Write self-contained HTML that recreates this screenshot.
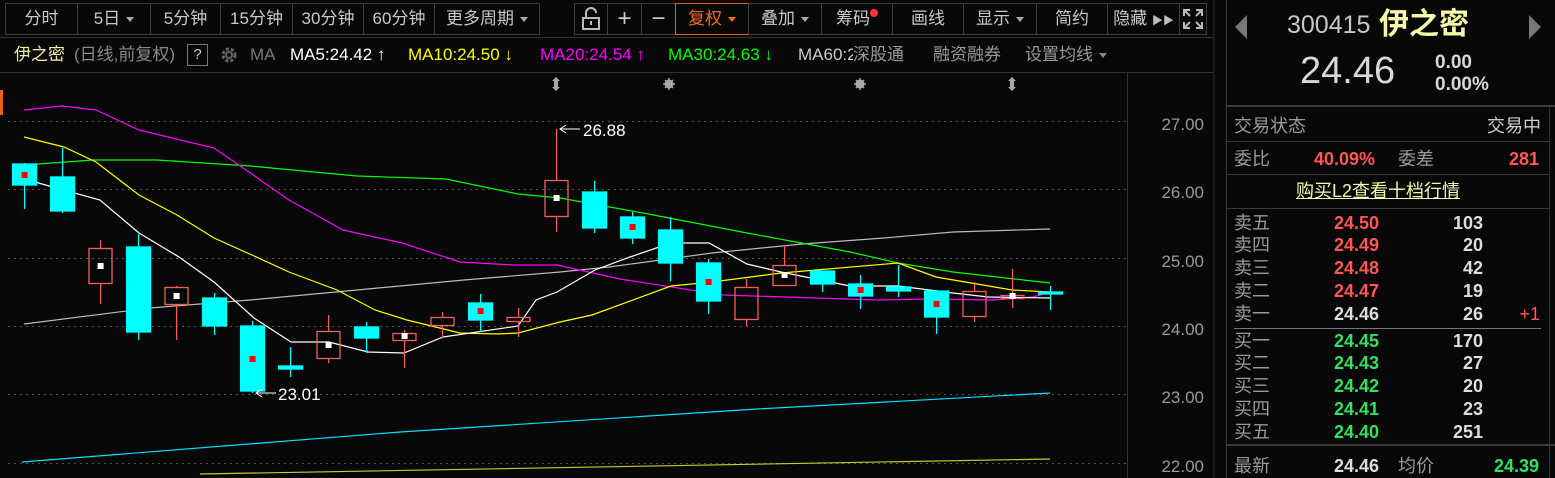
<!DOCTYPE html>
<html><head><meta charset="utf-8"><style>
*{margin:0;padding:0;box-sizing:border-box}
body{width:1555px;height:478px;background:#080808;overflow:hidden;position:relative;font-family:"Liberation Sans","Noto Sans CJK SC",sans-serif;color:#ccc}
.a{position:absolute;white-space:nowrap;line-height:22px}
.btn{position:absolute;top:3px;height:32px;border:1px solid #3c3c3c;color:#c8c8c8;font-size:17px;line-height:30px;text-align:center}
.tri{display:inline-block;width:0;height:0;border-left:4px solid transparent;border-right:4px solid transparent;border-top:5px solid #aaa;vertical-align:middle;margin-left:6px}
.ma{position:absolute;top:44px;font-size:17px;line-height:22px;white-space:nowrap}
.row{position:absolute;left:1234px;font-size:18px;line-height:22px;white-space:nowrap}
.lb{color:#9a9a9a}
.r{color:#ff5555;font-weight:bold}
.g{color:#33e060;font-weight:bold}
.w{color:#ddd;font-weight:bold}
</style></head><body>
<div class="btn" style="left:5px;width:73px">分时</div>
<div class="btn" style="left:77px;width:74px">5日<span class="tri"></span></div>
<div class="btn" style="left:150px;width:71px">5分钟</div>
<div class="btn" style="left:220px;width:73px">15分钟</div>
<div class="btn" style="left:292px;width:72px">30分钟</div>
<div class="btn" style="left:363px;width:72px">60分钟</div>
<div class="btn" style="left:434px;width:106px">更多周期<span class="tri"></span></div>
<div class="btn" style="left:574px;width:34px"><svg width="20" height="24" viewBox="0 0 20 24" style="margin-top:3px"><path d="M5 11V6a5 5 0 0 1 10 0" fill="none" stroke="#bbb" stroke-width="2"/><rect x="2" y="11" width="16" height="11" fill="none" stroke="#bbb" stroke-width="2"/><line x1="10" y1="14" x2="10" y2="18" stroke="#bbb" stroke-width="2"/></svg></div>
<div class="btn" style="left:607px;width:35px;font-size:24px">+</div>
<div class="btn" style="left:641px;width:35px;font-size:24px">−</div>
<div class="btn" style="left:675px;width:74px;border-color:#e8601c;color:#f06a20">复权<span class="tri" style="border-top-color:#f06a20"></span></div>
<div class="btn" style="left:748px;width:74px">叠加<span class="tri"></span></div>
<div class="btn" style="left:821px;width:72px">筹码<span style="display:inline-block;width:8px;height:8px;border-radius:4px;background:#f33;vertical-align:top;margin-top:5px"></span></div>
<div class="btn" style="left:892px;width:72px">画线</div>
<div class="btn" style="left:963px;width:74px">显示<span class="tri"></span></div>
<div class="btn" style="left:1036px;width:72px">简约</div>
<div class="btn" style="left:1107px;width:73px">隐藏 <span style="font-size:11px;color:#bbb">▶▶</span></div>
<div class="btn" style="left:1179px;width:28px"><svg width="22" height="22" viewBox="0 0 22 22" style="margin-top:4px" fill="none" stroke="#bbb" stroke-width="2"><path d="M2 8V2h6M14 2h6v6M20 14v6h-6M8 20H2v-6M3 3l5 5M19 3l-5 5M19 19l-5-5M3 19l5-5"/></svg></div>
<div class="a" style="left:0;top:37px;width:1213px;height:1px;background:#333"></div>
<div class="ma" style="left:14px;color:#f0f0a0">伊之密</div>
<div class="ma" style="left:74px;color:#888">(日线,前复权)</div>
<div class="a" style="left:187px;top:44px;width:21px;height:22px;border:1px solid #777;color:#ccc;font-size:15px;text-align:center;line-height:20px">?</div>
<svg class="a" style="left:219px;top:45px" width="20" height="20" viewBox="0 0 20 20"><circle cx="10" cy="10" r="6" fill="none" stroke="#666" stroke-width="3" stroke-dasharray="3 2"/><circle cx="10" cy="10" r="3" fill="none" stroke="#666" stroke-width="2"/></svg>
<div class="ma" style="left:250px;color:#777">MA</div>
<div class="ma" style="left:290px;color:#fff">MA5:24.42 ↑</div>
<div class="ma" style="left:408px;color:#ffff00">MA10:24.50 ↓</div>
<div class="ma" style="left:540px;color:#ff00ff">MA20:24.54 ↑</div>
<div class="ma" style="left:668px;color:#00ff00">MA30:24.63 ↓</div>
<div class="ma" style="left:798px;color:#ccc;width:55px;overflow:hidden">MA60:24</div>
<div class="ma" style="left:853px;color:#999">深股通</div>
<div class="ma" style="left:933px;color:#999">融资融券</div>
<div class="ma" style="left:1025px;color:#999">设置均线<span class="tri" style="border-top-color:#888"></span></div>
<div class="a" style="left:0;top:90px;width:3px;height:25px;background:#e8601c"></div>
<svg class="a" style="left:0;top:0" width="1215" height="478">
<g stroke="#555" stroke-dasharray="2 4" stroke-width="1">
<line x1="8" y1="121.5" x2="1127" y2="121.5"/><line x1="8" y1="189.5" x2="1127" y2="189.5"/><line x1="8" y1="258.5" x2="1127" y2="258.5"/><line x1="8" y1="326.5" x2="1127" y2="326.5"/><line x1="8" y1="394.5" x2="1127" y2="394.5"/><line x1="8" y1="463.5" x2="1127" y2="463.5"/>
</g>
<line x1="1127.5" y1="72" x2="1127.5" y2="478" stroke="#333"/>
<line x1="0" y1="72.5" x2="1213" y2="72.5" stroke="#333"/>
<g font-size="17" fill="#999" text-anchor="end" font-family="Liberation Sans">
<text x="1204" y="130">27.00</text><text x="1204" y="198">26.00</text><text x="1204" y="267">25.00</text><text x="1204" y="335">24.00</text><text x="1204" y="403">23.00</text><text x="1204" y="472">22.00</text>
</g>
<g fill="none" stroke-width="1.2">
<polyline stroke="#00e0ff" points="22,462 400,432 757,409 1050,393"/>
<polyline stroke="#c8c830" points="200,474 1050,459"/>
<polyline stroke="#bbb" points="24,324 150,308 250,300 357,290 464,280 560,272 609,267 712,253 802,244 884,238 953,232 1050,229"/>
<polyline stroke="#00ff00" points="24,165 93,160 157,160 250,166 357,176 446,179 518,194 560,198 643,213 747,233 850,252 898,263 953,272 1050,283"/>
<polyline stroke="#ff00ff" points="24,110 62,106 96,110 139,130 214,148 246,170 289,200 343,230 402,243 460,262 514,265 557,265 620,279 723,295 785,297 878,300 930,299 993,300 1033,297 1050,292"/>
<polyline stroke="#ffff00" points="24,137 64,147 96,162 139,195 177,215 214,238 252,255 289,272 337,290 375,310 407,320 460,333 498,334 518,333 560,322 592,315 671,286 712,282 781,273 898,263 936,277 1012,290 1050,292"/>
<polyline stroke="#fff" points="24,179 100,200 139,233 179,257 214,282 254,318 291,342 329,342 368,352 404,353 443,337 518,326 536,300 557,292 595,270 630,257 671,243 709,243 747,264 781,272 850,286 898,286 953,293 988,297 1050,298"/>
</g>
<g stroke-width="1.3">
<g stroke="#00ffff" fill="#00ffff">
<line x1="24.6" y1="163" x2="24.6" y2="209"/><rect x="12.6" y="164" width="24" height="21"/>
<line x1="62.6" y1="148" x2="62.6" y2="213"/><rect x="50.6" y="177" width="24" height="34"/>
<line x1="138.6" y1="234" x2="138.6" y2="340"/><rect x="126.6" y="247" width="24" height="85"/>
<line x1="214.6" y1="293" x2="214.6" y2="335"/><rect x="202.6" y="298" width="24" height="28"/>
<line x1="252.6" y1="321" x2="252.6" y2="393"/><rect x="240.6" y="326" width="24" height="65"/>
<line x1="290.6" y1="347" x2="290.6" y2="377"/><rect x="278.6" y="366" width="24" height="3"/>
<line x1="366.6" y1="322" x2="366.6" y2="353"/><rect x="354.6" y="327" width="24" height="11"/>
<line x1="480.6" y1="294" x2="480.6" y2="332"/><rect x="468.6" y="303" width="24" height="17"/>
<line x1="594.6" y1="181" x2="594.6" y2="233"/><rect x="582.6" y="192" width="24" height="36"/>
<line x1="632.6" y1="212" x2="632.6" y2="244"/><rect x="620.6" y="217" width="24" height="21"/>
<line x1="670.6" y1="217" x2="670.6" y2="281"/><rect x="658.6" y="230" width="24" height="33"/>
<line x1="708.6" y1="259" x2="708.6" y2="314"/><rect x="696.6" y="263" width="24" height="38"/>
<line x1="822.6" y1="271" x2="822.6" y2="292"/><rect x="810.6" y="271" width="24" height="13"/>
<line x1="860.6" y1="275" x2="860.6" y2="309"/><rect x="848.6" y="284" width="24" height="12"/>
<line x1="898.6" y1="265" x2="898.6" y2="297"/><rect x="886.6" y="287" width="24" height="4"/>
<line x1="936.6" y1="290" x2="936.6" y2="334"/><rect x="924.6" y="291" width="24" height="26"/>
<line x1="1050.6" y1="286" x2="1050.6" y2="310"/><rect x="1038.6" y="292" width="24" height="2"/>
</g>
<g stroke="#f0605a" fill="none">
<line x1="100.6" y1="240" x2="100.6" y2="248"/><line x1="100.6" y1="284" x2="100.6" y2="304"/><rect x="89" y="248.5" width="23" height="35"/>
<line x1="176.6" y1="286" x2="176.6" y2="287"/><line x1="176.6" y1="305" x2="176.6" y2="340"/><rect x="165" y="287.5" width="23" height="17"/>
<line x1="328.6" y1="315" x2="328.6" y2="331"/><line x1="328.6" y1="359" x2="328.6" y2="363"/><rect x="317" y="331.5" width="23" height="27"/>
<line x1="404.6" y1="330" x2="404.6" y2="333"/><line x1="404.6" y1="341" x2="404.6" y2="368"/><rect x="393" y="333.5" width="23" height="7"/>
<line x1="442.6" y1="312" x2="442.6" y2="317"/><line x1="442.6" y1="326" x2="442.6" y2="338"/><rect x="431" y="317.5" width="23" height="8"/>
<line x1="518.6" y1="308" x2="518.6" y2="317"/><line x1="518.6" y1="322" x2="518.6" y2="337"/><rect x="507" y="317.5" width="23" height="4"/>
<line x1="556.6" y1="129" x2="556.6" y2="180"/><line x1="556.6" y1="217" x2="556.6" y2="232"/><rect x="545" y="180.5" width="23" height="36"/>
<line x1="746.6" y1="279" x2="746.6" y2="287"/><line x1="746.6" y1="320" x2="746.6" y2="326"/><rect x="735" y="287.5" width="23" height="32"/>
<line x1="784.6" y1="245" x2="784.6" y2="265"/><rect x="773" y="265.5" width="23" height="20"/>
<line x1="974.6" y1="282" x2="974.6" y2="291"/><line x1="974.6" y1="317" x2="974.6" y2="322"/><rect x="963" y="291.5" width="23" height="25"/>
<line x1="1012.6" y1="269" x2="1012.6" y2="295"/><line x1="1012.6" y1="299" x2="1012.6" y2="308"/><rect x="1001" y="295.5" width="23" height="3"/>
</g>
<g fill="#ff0000">
<rect x="21.6" y="172" width="6" height="6"/><rect x="249.6" y="356" width="6" height="6"/><rect x="477.6" y="308" width="6" height="6"/><rect x="629.6" y="224" width="6" height="6"/><rect x="705.6" y="279" width="6" height="6"/><rect x="857.6" y="287" width="6" height="6"/><rect x="933.6" y="301" width="6" height="6"/>
</g>
<g fill="#fff">
<rect x="97.6" y="263" width="6" height="6"/><rect x="173.6" y="293" width="6" height="6"/><rect x="325.6" y="342" width="6" height="6"/><rect x="401.6" y="333" width="6" height="6"/><rect x="553.6" y="195" width="6" height="6"/><rect x="781.6" y="272" width="6" height="6"/><rect x="1009.6" y="293" width="6" height="6"/>
</g>
</g>
<g stroke="#fff" fill="none" stroke-width="1"><path d="M560 129h20M566 125l-6 4 6 4"/><path d="M256 393h20M262 389l-6 4 6 4"/></g>
<text x="583" y="136" fill="#fff" font-size="17" font-family="Liberation Sans">26.88</text>
<text x="278" y="400" fill="#fff" font-size="17" font-family="Liberation Sans">23.01</text>
<g fill="#aaa">
<path d="M556 77l4 4h-2v6h2l-4 4-4-4h2v-6h-2z"/><path d="M1012 77l4 4h-2v6h2l-4 4-4-4h2v-6h-2z"/>
<circle cx="669" cy="84" r="4.5"/><circle cx="860" cy="84" r="4.5"/>
</g>
<g stroke="#aaa" stroke-width="1.5"><path d="M663 84h12M669 78v12M665 80l8 8M673 80l-8 8"/><path d="M854 84h12M860 78v12M856 80l8 8M864 80l-8 8"/></g>
<rect x="1213" y="0" width="13" height="478" fill="#181818"/>
<rect x="1215" y="38" width="10" height="440" fill="#2a2a2a"/>
<path d="M1217 440l5 10-5 10z" fill="#ccc"/>
</svg>
<div class="a" style="left:1226px;top:0;width:1px;height:478px;background:#3a3a3a"></div>
<div class="a" style="left:1549px;top:106px;width:1px;height:372px;background:#2f2f2f"></div>
<svg class="a" style="left:1235px;top:15px" width="12" height="24"><path d="M12 0L0 12 12 24z" fill="#777"/></svg>
<svg class="a" style="left:1529px;top:15px" width="12" height="24"><path d="M0 0L12 12 0 24z" fill="#777"/></svg>
<div class="a" style="left:1287px;top:12px;font-size:25px;line-height:26px;color:#c8c8c8">300415</div>
<div class="a" style="left:1379px;top:8px;font-size:30px;line-height:34px;color:#f8f8a8;font-weight:bold">伊之密</div>
<div class="a" style="left:1300px;top:50px;font-size:38px;line-height:42px;color:#d8d8d8">24.46</div>
<div class="a" style="left:1435px;top:52px;font-size:19px;color:#d8d8d8;font-weight:bold;line-height:22px">0.00<br>0.00%</div>
<div class="a" style="left:1226px;top:105px;width:329px;height:2px;background:#3a3a3a"></div>
<div class="row lb" style="top:115px">交易状态</div>
<div class="a" style="right:14px;top:115px;font-size:18px;color:#ccc">交易中</div>
<div class="a" style="left:1226px;top:141px;width:323px;height:1px;background:#3a3a3a"></div>
<div class="row lb" style="top:148px">委比</div>
<div class="a r" style="left:1314px;top:148px;font-size:18px">40.09%</div>
<div class="a lb" style="left:1398px;top:148px;font-size:18px">委差</div>
<div class="a r" style="right:16px;top:148px;font-size:18px">281</div>
<div class="a" style="left:1226px;top:174px;width:323px;height:1px;background:#3a3a3a"></div>
<div class="a" style="left:1296px;top:180px;font-size:18px;color:#f8f8b0;text-decoration:underline">购买L2查看十档行情</div>
<div class="a" style="left:1226px;top:208px;width:323px;height:1px;background:#3a3a3a"></div>
<div class="row lb" style="top:212px">卖五</div><div class="a r" style="left:1334px;top:212px;font-size:18px">24.50</div><div class="a w" style="right:72px;top:212px;font-size:18px">103</div>
<div class="row lb" style="top:234px">卖四</div><div class="a r" style="left:1334px;top:234px;font-size:18px">24.49</div><div class="a w" style="right:72px;top:234px;font-size:18px">20</div>
<div class="row lb" style="top:257px">卖三</div><div class="a r" style="left:1334px;top:257px;font-size:18px">24.48</div><div class="a w" style="right:72px;top:257px;font-size:18px">42</div>
<div class="row lb" style="top:280px">卖二</div><div class="a r" style="left:1334px;top:280px;font-size:18px">24.47</div><div class="a w" style="right:72px;top:280px;font-size:18px">19</div>
<div class="row lb" style="top:303px">卖一</div><div class="a w" style="left:1334px;top:303px;font-size:18px">24.46</div><div class="a w" style="right:72px;top:303px;font-size:18px">26</div><div class="a" style="right:15px;top:303px;font-size:18px;color:#ff5555">+1</div>
<div class="a" style="left:1234px;top:328px;width:307px;height:1px;background:#777"></div>
<div class="row lb" style="top:330px">买一</div><div class="a g" style="left:1334px;top:330px;font-size:18px">24.45</div><div class="a w" style="right:72px;top:330px;font-size:18px">170</div>
<div class="row lb" style="top:352px">买二</div><div class="a g" style="left:1334px;top:352px;font-size:18px">24.43</div><div class="a w" style="right:72px;top:352px;font-size:18px">27</div>
<div class="row lb" style="top:375px">买三</div><div class="a g" style="left:1334px;top:375px;font-size:18px">24.42</div><div class="a w" style="right:72px;top:375px;font-size:18px">20</div>
<div class="row lb" style="top:398px">买四</div><div class="a g" style="left:1334px;top:398px;font-size:18px">24.41</div><div class="a w" style="right:72px;top:398px;font-size:18px">23</div>
<div class="row lb" style="top:421px">买五</div><div class="a g" style="left:1334px;top:421px;font-size:18px">24.40</div><div class="a w" style="right:72px;top:421px;font-size:18px">251</div>
<div class="a" style="left:1226px;top:444px;width:329px;height:2px;background:#3a3a3a"></div>
<div class="row lb" style="top:455px">最新</div><div class="a w" style="left:1334px;top:455px;font-size:18px">24.46</div><div class="a lb" style="left:1398px;top:455px;font-size:18px">均价</div><div class="a g" style="right:16px;top:455px;font-size:18px">24.39</div>
</body></html>
